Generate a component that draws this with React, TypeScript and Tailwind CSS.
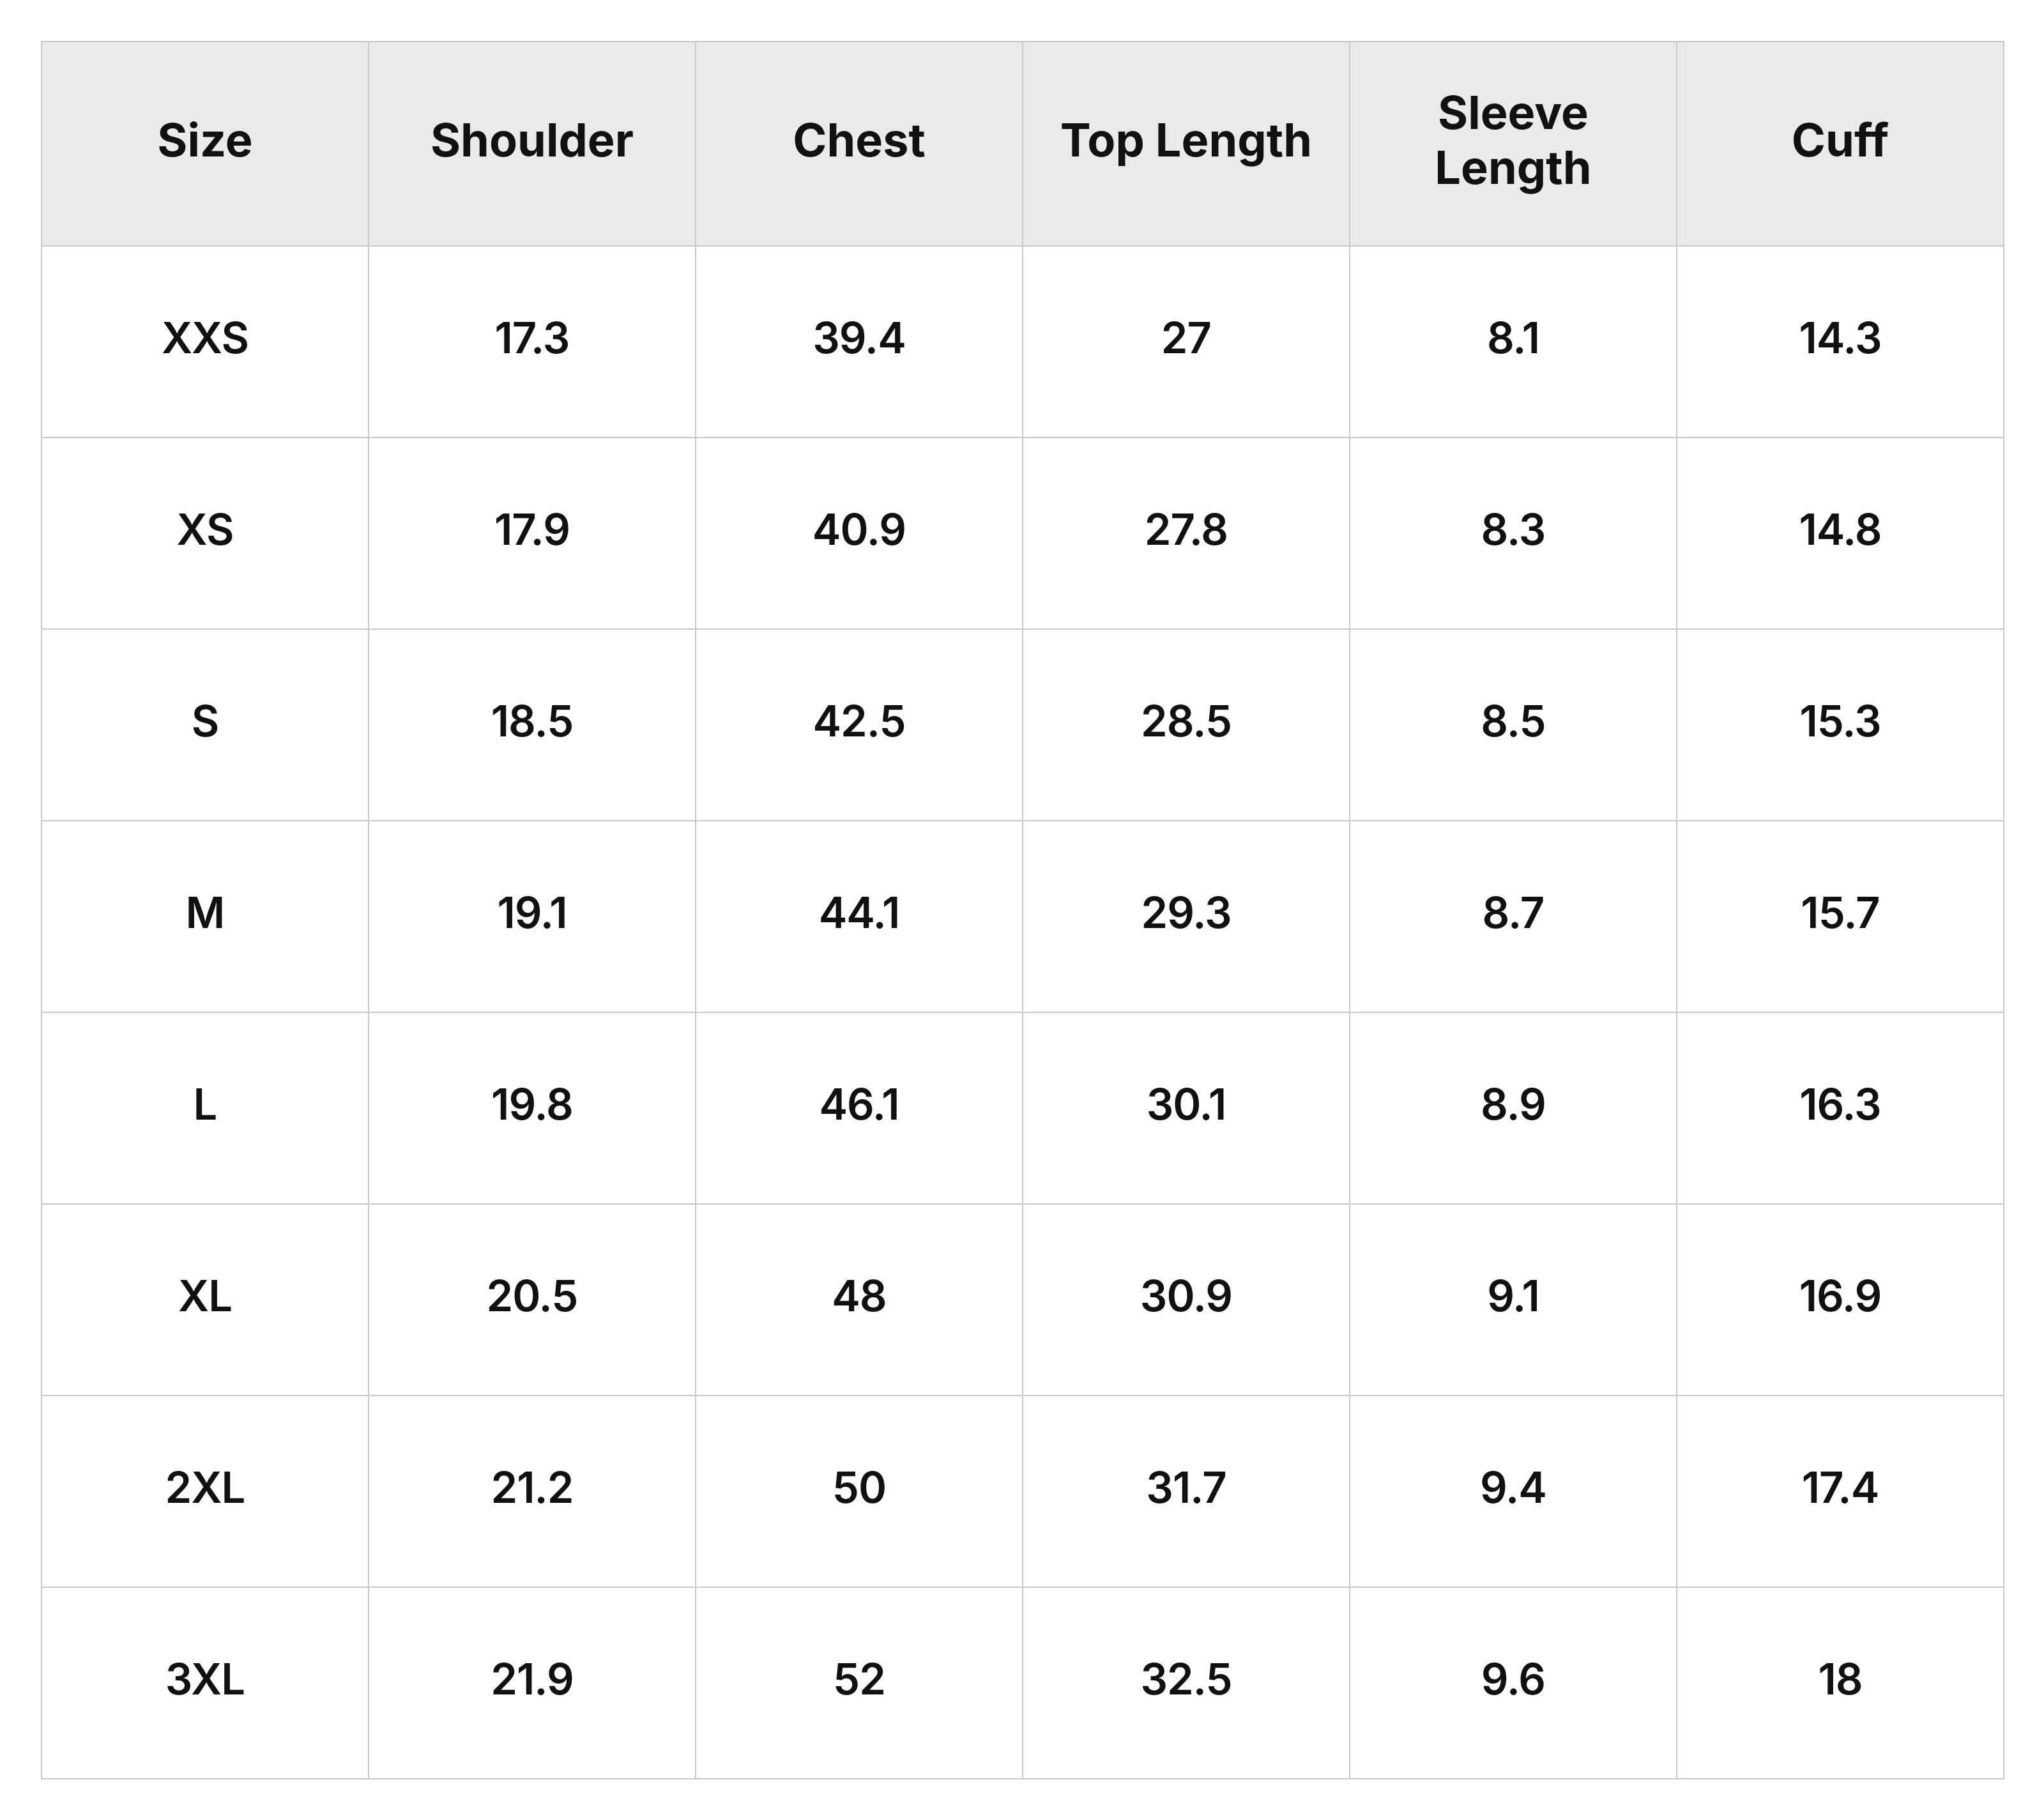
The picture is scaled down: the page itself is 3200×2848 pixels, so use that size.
import React from "react";

const headers = ["Size", "Shoulder", "Chest", "Top Length", "Sleeve Length", "Cuff"];
const rows: string[][] = [
  ["XXS", "17.3", "39.4", "27", "8.1", "14.3"],
  ["XS", "17.9", "40.9", "27.8", "8.3", "14.8"],
  ["S", "18.5", "42.5", "28.5", "8.5", "15.3"],
  ["M", "19.1", "44.1", "29.3", "8.7", "15.7"],
  ["L", "19.8", "46.1", "30.1", "8.9", "16.3"],
  ["XL", "20.5", "48", "30.9", "9.1", "16.9"],
  ["2XL", "21.2", "50", "31.7", "9.4", "17.4"],
  ["3XL", "21.9", "52", "32.5", "9.6", "18"],
];

export default function App() {
  return (
    <div
      className="w-[3200px] h-[2848px] bg-white pl-[64px] pt-[64px]"
      style={{ fontFamily: "Inter, 'Noto Sans', sans-serif" }}
    >
      <table className="w-[3074px] table-fixed border-collapse border-2 border-[#c9c9c9] text-[#111111]">
        <thead>
          <tr className="bg-[#eaeaea]">
            {headers.map((h) => (
              <th
                key={h}
                className="h-[320px] border-2 border-[#c9c9c9] px-[44px] pb-[12px] text-center align-middle text-[72px] font-bold leading-[86px]"
              >
                {h}
              </th>
            ))}
          </tr>
        </thead>
        <tbody>
          {rows.map((r) => (
            <tr key={r[0]}>
              {r.map((c, i) => (
                <td
                  key={i}
                  className="h-[300px] border-2 border-[#c9c9c9] pb-[12px] text-center align-middle text-[67px] font-semibold tracking-[-1px]"
                >
                  {c}
                </td>
              ))}
            </tr>
          ))}
        </tbody>
      </table>
    </div>
  );
}
